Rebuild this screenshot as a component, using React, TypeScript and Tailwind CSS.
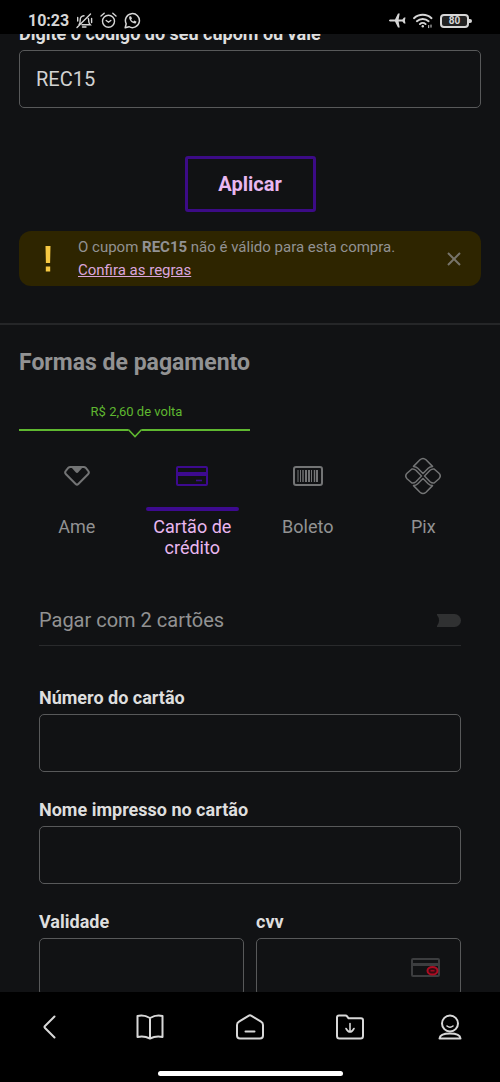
import type { ReactNode } from "react";

const inputClass =
  "block h-[58px] w-full rounded-[5px] border border-[#58595a] bg-transparent px-4 text-xl text-[#d2d2d2] outline-none";

function StatusBar() {
  return (
    <header className="relative z-10 flex h-[34px] shrink-0 items-center justify-between bg-black px-7 pt-[7px] text-[#d6d6d6]">
      <div className="flex items-center gap-[7px]">
        <span className="text-base font-bold">10:23</span>
        <svg width="17" height="16" viewBox="0 0 17 16" fill="none" stroke="currentColor" strokeWidth="1.4" strokeLinecap="round" aria-label="Silencioso">
          <path d="M3 11.500c1.200-1.200 1.200-2.800 1.200-4.500C4.200 4.500 6 3 8 2.800M12.300 5.500c.5 1 .4 1.700.4 2.500 0 1.700.5 2.700 1.500 3.700H6M6.500 14h3.500M1 14.500 14.500 1M1.700 4.500v3.500M15.600 5.500v4" />
        </svg>
        <svg width="17" height="17" viewBox="0 0 17 17" fill="none" stroke="currentColor" strokeWidth="1.400" strokeLinecap="round" aria-label="Alarme">
          <circle cx="8.500" cy="9.200" r="6" />
          <path d="M1 4 4.200 1.300M16 4l-3.200-2.700M6.200 8.500l2.300 1.700 2.300-1.700" />
        </svg>
        <svg width="17" height="17" viewBox="0 0 17 17" fill="none" stroke="currentColor" strokeWidth="1.500" strokeLinejoin="round" aria-label="WhatsApp">
          <path d="M1.200 15.800l1-4A7 7 0 1 1 5 14.700z" />
          <path d="M5.300 4.500c-.9 3.300 3 7.300 6.300 7l1-1.700-2.200-1.200-.9 1C8.300 9.300 7.500 8.600 7.100 7.600l.9-1L7 4.300z" fill="currentColor" stroke="none" />
        </svg>
      </div>
      <div className="flex items-center gap-[7px]">
        <svg width="17" height="15" viewBox="0 0 17 15" fill="currentColor" aria-label="Modo avião">
          <path d="M0 7.500C0 6.700.8 6.400 2 6.400h4L9 .5h1.700L9.600 6.400h3.800l1.600-2h1.500l-.6 3.100.6 3.100H15l-1.600-2H9.600l1.100 5.900H9L6 8.600H2c-1.200 0-2-.3-2-1.100z" />
        </svg>
        <svg width="20" height="16" viewBox="0 0 20 16" fill="none" stroke="currentColor" strokeWidth="1.900" strokeLinecap="round" aria-label="Wi-Fi">
          <path d="M1 5.200c4.800-4.600 12.700-4.600 17.500 0M3.900 8.200c3.200-3 8.500-3 11.700 0M6.900 11.100c1.600-1.500 4.100-1.500 5.700 0" />
          <circle cx="9.800" cy="13.300" r="1.200" fill="currentColor" stroke="none" />
          <path d="M15.700 12.500v2.200M18 12v2.200" strokeWidth="1" />
        </svg>
        <div className="flex items-center" aria-label="Bateria 80%">
          <span className="flex h-[14px] w-[29px] items-center justify-center rounded-[4px] border-2 border-current bg-[#222] text-[10px] leading-none font-bold">
            80
          </span>
          <span className="h-1 w-[3px] rounded-r-sm bg-current" />
        </div>
      </div>
    </header>
  );
}

function Field({ id, label, children }: { id: string; label: string; children?: ReactNode }) {
  return (
    <div>
      <label htmlFor={id} className="mb-1 block text-lg leading-6 font-bold text-[#dedede]">
        {label}
      </label>
      <div className="relative">
        <input id={id} type="text" inputMode="numeric" className={inputClass} />
        {children}
      </div>
    </div>
  );
}

function AmeIcon() {
  return (
    <svg width="28" height="22" viewBox="0 0 28 22" fill="none" stroke="currentColor" strokeWidth="2" strokeLinejoin="round">
      <path d="M7.200 2h13.600c.7 0 1.300.2 1.800.7l2.400 3c1 1.100 1 2.500 0 3.500L15.300 19c-.8.8-1.800.8-2.600 0L3 9.200c-1-1-1-2.400 0-3.500l2.400-3C5.900 2.200 6.500 2 7.200 2z" />
      <path d="M8.500 2.500h11L15.300 7.300c-.8.8-1.800.8-2.600 0z" fill="currentColor" stroke="none" />
    </svg>
  );
}

function CardIcon() {
  return (
    <svg width="32" height="22" viewBox="0 0 32 22" fill="none" stroke="currentColor" strokeWidth="2">
      <rect x="1" y="2" width="30" height="18" rx="1" />
      <path d="M1 9h30" strokeWidth="4" />
      <path d="M20 15.500h6" strokeWidth="1.600" />
    </svg>
  );
}

function BarcodeIcon() {
  return (
    <svg width="30" height="22" viewBox="0 0 30 22" fill="none" stroke="currentColor">
      <rect x="1" y="2" width="28" height="18" rx="2" strokeWidth="2" />
      <path d="M5 5v12M7.500 5v12M18.500 5v12" strokeWidth="1" />
      <path d="M10 5v12M21.500 5v12" strokeWidth="1.400" />
      <path d="M13 5v12M16 5v12M24 5v12" strokeWidth="2" />
    </svg>
  );
}

function PixIcon() {
  return (
    <svg width="36" height="38" viewBox="-18 -19 36 38" fill="none" stroke="currentColor" strokeWidth="1.500" strokeLinejoin="round">
      <path d="M-9.500-9.600-3-16.200q3-2.700 6 0L9.500-9.600C7.500-9.600 6.400-8.900 5.200-7.700L0-2.500l-5.200-5.200C-6.400-8.900-7.500-9.600-9.500-9.600z" />
      <path d="M-9.500 9.600-3 16.200q3 2.700 6 0l6.500-6.600C7.500 9.600 6.400 8.900 5.200 7.700L0 2.500l-5.200 5.200C-6.400 8.900-7.500 9.600-9.500 9.600z" />
      <path d="M-1.500 0-7.100-5.700q-1.700-1.600-4-1.300L-16-2.700q-2.500 2.700 0 5.400l4.900 4.300q2.300.3 4-1.300z" />
      <path d="M1.500 0 7.100-5.700q1.700-1.600 4-1.300L16-2.700q2.500 2.700 0 5.400l-4.900 4.300q-2.300.3-4-1.300z" />
    </svg>
  );
}

const methods = [
  { name: "Ame", icon: <AmeIcon />, active: false },
  { name: "Cartão de crédito", icon: <CardIcon />, active: true },
  { name: "Boleto", icon: <BarcodeIcon />, active: false },
  { name: "Pix", icon: <PixIcon />, active: false },
];

const navItems = [
  { name: "Voltar", path: <path d="M19.500 4.500 10 14q-1 1 0 2l9.500 9.500" /> },
  {
    name: "Ler",
    path: <path d="M15 6Q9 2.500 2.500 4v21Q9 23.500 15 26.500 21 23.500 27.500 25V4Q21 2.500 15 6v20.500" />,
  },
  {
    name: "Início",
    path: <path d="M13.500 3.800q1.500-.9 3 0L26 9.600q2 1.200 2 3.400v10.500q0 3-3 3H5q-3 0-3-3V13q0-2.200 2-3.400zM10.500 19.500h9" />,
  },
  {
    name: "Downloads",
    path: (
      <>
        <path d="M4 3.500h6.500q1 0 1.600.8l1.500 2H26q2 0 2 2V24q0 2.500-2.500 2.500h-21Q2 26.500 2 24V5.500q0-2 2-2z" />
        <path d="M15 11.500v8.500M11 16.500q2 3.500 4 3.500t4-3.500" strokeWidth="1.600" />
      </>
    ),
  },
  {
    name: "Perfil",
    path: (
      <>
        <circle cx="15" cy="11.500" r="8" />
        <path d="M12 14q3 2.500 6 0" strokeWidth="1.600" />
        <path d="M4.500 26.500q.5-5 10.500-5t10.500 5z" />
      </>
    ),
  },
];

export default function App() {
  return (
    <div className="flex h-screen flex-col bg-[#111214] font-[Roboto,sans-serif] text-[#929293]">
      <StatusBar />

      <main className="min-h-0 flex-1 overflow-hidden">
        <section className="-mt-3 border-b-2 border-[#252628] px-[19px] pb-[37px]">
          <label htmlFor="coupon" className="mb-1 block text-lg leading-6 font-bold text-[#dedede]">
            Digite o código do seu cupom ou vale
          </label>
          <input id="coupon" type="text" defaultValue="REC15" className={inputClass} />
          <button
            type="button"
            className="mx-auto mt-12 block h-14 w-[131px] rounded-[3px] border-[3px] border-[#3c0b86] text-xl font-bold text-[#e9b7f0]"
          >
            Aplicar
          </button>

          <div role="alert" className="mt-[19px] flex h-[55px] items-center rounded-xl bg-[#2e2500] pr-[19px] pl-[26px] text-[15px]">
            <svg width="6" height="28" viewBox="0 0 6 28" fill="#f5c842" aria-hidden="true">
              <path d="M.500 1h5l-.4 17H.9zM.800 21.500h4.400v5H.8z" />
            </svg>
            <div className="ml-[27px] flex-1 leading-[23px]">
              <p>
                O cupom <strong className="font-bold">REC15</strong> não é válido para esta compra.
              </p>
              <a href="#regras" className="text-[#dba5de] underline">
                Confira as regras
              </a>
            </div>
            <button type="button" aria-label="Fechar" className="text-[#77746a]">
              <svg width="16" height="16" viewBox="0 0 16 16" fill="none" stroke="currentColor" strokeWidth="2">
                <path d="M2 2l12 12M14 2 2 14" />
              </svg>
            </button>
          </div>
        </section>

        <section className="px-[19px]">
          <h2 className="pt-6 text-[23px] leading-7 font-bold">Formas de pagamento</h2>

          <div className="mt-[25px] w-1/2 text-[#5fb830]">
            <p className="pl-1 text-center text-[13px] leading-5">R$ 2,60 de volta</p>
            <div className="mt-[7px] flex items-start">
              <span className="h-[2px] flex-1 bg-current" />
              <svg width="14" height="9" viewBox="0 0 14 9" fill="none" stroke="currentColor" strokeWidth="1.600">
                <path d="M0 1h.8L7 7.500 13.200 1h.8" />
              </svg>
              <span className="h-[2px] flex-1 bg-current" />
            </div>
          </div>

          <div role="tablist" aria-label="Formas de pagamento" className="mt-[15px] grid grid-cols-4">
            {methods.map((method) => (
              <button
                key={method.name}
                type="button"
                role="tab"
                aria-selected={method.active}
                className="flex flex-col items-center px-[11px]"
              >
                <span className={method.active ? "flex h-[46px] items-center text-[#3d0a8f]" : "flex h-[46px] items-center text-[#737475]"}>
                  {method.icon}
                </span>
                <span className={method.active ? "mt-2 h-1 w-full rounded-sm bg-[#3d0a8f]" : "mt-2 h-1 w-full"} />
                <span className={method.active ? "mt-[5px] text-lg leading-[21px] text-[#e9b7f0]" : "mt-[5px] text-lg leading-[21px]"}>
                  {method.name}
                </span>
              </button>
            ))}
          </div>

          <form className="flex flex-col gap-[26px] px-5 pt-[50px]">
            <div className="mb-[14px] flex items-center justify-between border-b border-[#292a2c] pb-[13px]">
              <label htmlFor="two-cards" className="text-xl leading-6">
                Pagar com 2 cartões
              </label>
              <input
                id="two-cards"
                type="checkbox"
                role="switch"
                className="relative h-[13px] w-6 appearance-none overflow-hidden rounded-r-full bg-[#303132] before:absolute before:-top-[2px] before:-left-[15px] before:size-[17px] before:rounded-full before:bg-[#111214]"
              />
            </div>
            <Field id="number" label="Número do cartão" />
            <Field id="name" label="Nome impresso no cartão" />
            <div className="grid grid-cols-2 gap-3">
              <Field id="expiry" label="Validade" />
              <Field id="cvv" label="cvv">
                <svg
                  className="absolute top-5 right-5"
                  width="30"
                  height="20"
                  viewBox="0 0 30 20"
                  fill="none"
                  stroke="#3c3d3f"
                  strokeWidth="2"
                  aria-hidden="true"
                >
                  <rect x="1" y="1" width="27" height="17" rx="1" />
                  <path d="M1 6.500h27" strokeWidth="3" />
                  <ellipse cx="21.500" cy="12.800" rx="5" ry="3.800" fill="#3a0a12" stroke="#ad0c22" />
                  <path d="M19.500 12.800h4" stroke="#ad0c22" strokeWidth="1.300" />
                </svg>
              </Field>
            </div>
          </form>
        </section>
      </main>

      <footer className="flex h-[90px] shrink-0 flex-col items-center justify-between bg-black pt-5 pb-[6px]">
        <nav className="grid w-full grid-cols-5 text-[#d8d8d8]">
          {navItems.map((item) => (
            <button key={item.name} type="button" aria-label={item.name} className="flex justify-center">
              <svg
                width="30"
                height="30"
                viewBox="0 0 30 30"
                fill="none"
                stroke="currentColor"
                strokeWidth="2"
                strokeLinecap="round"
                strokeLinejoin="round"
              >
                {item.path}
              </svg>
            </button>
          ))}
        </nav>
        <span className="h-[5px] w-[37%] rounded-full bg-white" />
      </footer>
    </div>
  );
}
